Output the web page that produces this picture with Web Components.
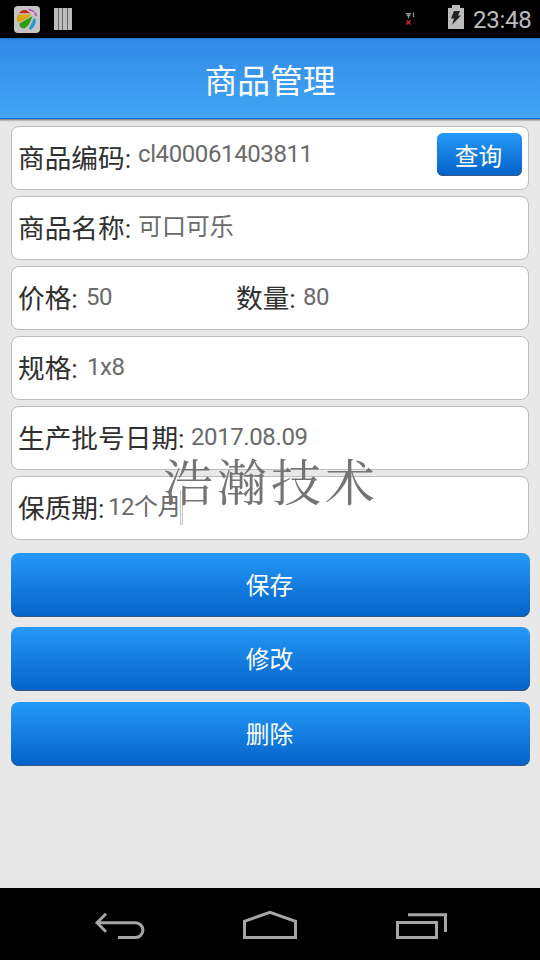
<!DOCTYPE html>
<html lang="zh-CN">
<head>
<meta charset="utf-8">
<title>商品管理</title>
<style>
html, body { margin: 0; height: 100%; }
body { background: #e8e8e8; font-family: Roboto, "Noto Sans CJK SC", sans-serif; overflow: hidden; }
</style>
</head>
<body>
<app-screen>
  <status-bar slot="status" time="23:48"></status-bar>
  <title-bar slot="title">商品管理</title-bar>
  <form-row>
    <form-field style="--label:120px;--shift:-4px" label="商品编码:">cl400061403811</form-field>
    <blue-button small slot="action">查询</blue-button>
  </form-row>
  <form-row><form-field style="--label:120px;--tracking:-.1px" label="商品名称:">可口可乐</form-field></form-row>
  <form-row>
    <form-field style="--label:68px;--width:218px" label="价格:">50</form-field>
    <form-field style="--label:67px" label="数量:">80</form-field>
  </form-row>
  <form-row><form-field style="--label:69px" label="规格:">1x8</form-field></form-row>
  <form-row><form-field style="--label:173px" label="生产批号日期:">2017.08.09</form-field></form-row>
  <form-row><form-field caret style="--label:90px;--tracking:-.5px" label="保质期:">12个月</form-field></form-row>
  <blue-button slot="buttons">保存</blue-button>
  <blue-button slot="buttons">修改</blue-button>
  <blue-button slot="buttons">删除</blue-button>
  <water-mark slot="overlay">浩瀚技术</water-mark>
  <nav-bar slot="nav"></nav-bar>
</app-screen>

<script>
function define(name, html) {
  const template = document.createElement('template');
  template.innerHTML = html;
  customElements.define(name, class extends HTMLElement {
    constructor() {
      super();
      this.attachShadow({ mode: 'open' }).appendChild(template.content.cloneNode(true));
    }
    connectedCallback() {
      this.shadowRoot.querySelectorAll('[data-attr]').forEach(el => {
        el.textContent = this.getAttribute(el.dataset.attr);
      });
    }
  });
}

define('app-screen', `
<style>
:host { display: flex; flex-direction: column; width: 540px; height: 960px; position: relative; background: #e8e8e8; }
.rows { display: flex; flex-direction: column; gap: 6px; padding: 3px 11px 0; }
.buttons { display: grid; grid-template-rows: 64px 64px 64px; row-gap: 10.4px; padding: 13px 10px 0 11px; }
.space { flex: 1; }
</style>
<slot name="status"></slot>
<slot name="title"></slot>
<div class="rows"><slot></slot></div>
<div class="buttons"><slot name="buttons"></slot></div>
<div class="space"></div>
<slot name="nav"></slot>
<slot name="overlay"></slot>`);

define('status-bar', `
<style>
:host { display: flex; align-items: center; box-sizing: border-box; height: 38px; padding: 0 9px 0 14px; background: #000; color: #bdbdbd; }
svg { display: block; flex: none; }
.stripes { margin-left: 14px; }
.signal { margin-left: auto; }
.battery { margin-left: 33px; margin-bottom: 4px; }
span { margin-left: 9px; font-size: 24px; line-height: 38px; padding-top: 1px; letter-spacing: -.25px; width: 58px; white-space: nowrap; }
</style>
<svg width="26" height="28" viewBox="0 0 26 28">
  <rect y="1" width="26" height="27" rx="4" fill="#c4c4c4"/>
  <path d="M5 8.3Q7 4.5 12 5L16.5 8.3Z" fill="#c92b17"/>
  <path d="M14.5 4.5Q20.5 5 22.5 11" fill="none" stroke="#b846bd" stroke-width="1.6" stroke-dasharray="6 1"/>
  <path d="M18 9.5L4 9.5Q1.5 14 4 17Q7 18 18 9.5Z" fill="#dda412"/>
  <path d="M18.5 11L5.5 18.5Q5 23 10 23.5Q15 22 18.5 11Z" fill="#319a11"/>
  <path d="M20 13L15 23.5L16.5 25Q23 20 21.5 14Z" fill="#239bc8"/>
</svg>
<svg class="stripes" width="18" height="22" viewBox="0 0 18 22">
  <path fill="#bdbdbd" d="M0 0h18v22H0z"/><path d="M4.5 0v22M8.5 0v22M13.5 0v22" stroke="#656565"/>
</svg>
<svg class="signal" width="10" height="14" viewBox="0 0 10 14">
  <path d="M.5 1.5H6M3.5 1v5M1.5 2.5l2 2l2-2M8.5 0.5V5" stroke="#949494" fill="none" stroke-width="1.2"/>
  <path d="M1.5 8.5l4 4M5.5 8.5l-4 4" stroke="#c7232b" stroke-width="1.7"/>
</svg>
<svg class="battery" width="16" height="24" viewBox="0 0 16 24">
  <path fill="#bdbdbd" d="M4 0h8v3h4v21H0V3h4z"/>
  <path fill="#222" d="M6 6h6l-2 4.5h3L4 20l2-6.5H3z"/>
</svg>
<span data-attr="time"></span>`);

define('title-bar', `
<style>
:host { display: flex; justify-content: center; box-sizing: border-box; height: 85px; padding-top: 2px; color: #fff; font-size: 32.8px; line-height: 85px;
  background: linear-gradient(#2377d4 0 1px, #318ae8 2px, #43a5f3 80px, #0d6fd2 80px 81px, #8a9199 81px 82px, #bcbcbc 82px 83px, #e0e0e0 83px 84px, #e8e8e8 84px); }
</style>
<slot></slot>`);

define('form-row', `
<style>
:host { display: flex; box-sizing: border-box; height: 64px; width: 518px; padding: 0 6px; background: #fff; border: 1px solid #bdbdbd; border-radius: 8px; }
.action { margin-left: auto; padding-top: 6px; }
</style>
<slot></slot><div class="action"><slot name="action"></slot></div>`);

define('form-field', `
<style>
:host { display: flex; width: var(--width, auto); line-height: 62px; white-space: nowrap; }
label { flex: none; width: var(--label); font-size: 26.7px; color: #303030; padding-top: 1px; }
.value { display: flex; align-items: center; font-size: 24px; letter-spacing: var(--tracking, -.4px); color: #6a6a6a; margin-top: var(--shift, -1px); height: 61px; }
.caret { display: none; width: 3px; height: 35px; margin: 2px 0 0 -1px; box-sizing: border-box; border: solid #c4c4c4; border-width: 0 1px; }
:host([caret]) .caret { display: block; }
</style>
<label data-attr="label"></label><div class="value"><slot></slot><i class="caret"></i></div>`);

define('blue-button', `
<style>
:host { display: flex; justify-content: center; align-items: center; box-sizing: border-box; height: 64px; border-radius: 8px; color: #fff; font-size: 23.7px; line-height: 62px; padding: 2px 2px 0 0;
  background: linear-gradient(#2699f7, #0462c9); box-shadow: inset 0 -1px #39577a; }
:host([small]) { width: 85px; height: 43px; border-radius: 6px; line-height: 40px; padding: 5px 2px 0 0; }
</style>
<slot></slot>`);

define('water-mark', `
<style>
:host { position: absolute; left: 163px; top: 440px; width: 220px; font: 400 50px/78px "Noto Serif CJK SC", "AR PL UMing CN", "Noto Sans CJK SC", serif; letter-spacing: 4px; color: #747474; white-space: nowrap; pointer-events: none; }
</style>
<slot></slot>`);

define('nav-bar', `
<style>
:host { display: flex; justify-content: center; gap: 98px; box-sizing: border-box; height: 72px; padding-top: 22px; background: #000; }
svg { display: block; }
path { fill: none; stroke: #a6a6a6; stroke-width: 3; }
</style>
<svg width="51" height="30" viewBox="0 0 51 30"><path d="M12 1.7L3 10.7L12 19.7M3 10.7H41.5a7.4 7.4 0 0 1 0 14.8H24" transform="translate(0 2)"/></svg>
<svg width="54" height="30" viewBox="0 0 54 30"><path d="M1.5 27.5V11.3L27 2.3L52.5 11.3V27.5Z"/></svg>
<svg width="52" height="30" viewBox="-1 0 52 30"><path d="M1.5 12.5H40.5V27.5H1.5ZM12 4.7H49.5V22"/></svg>`);
</script>
</body>
</html>
